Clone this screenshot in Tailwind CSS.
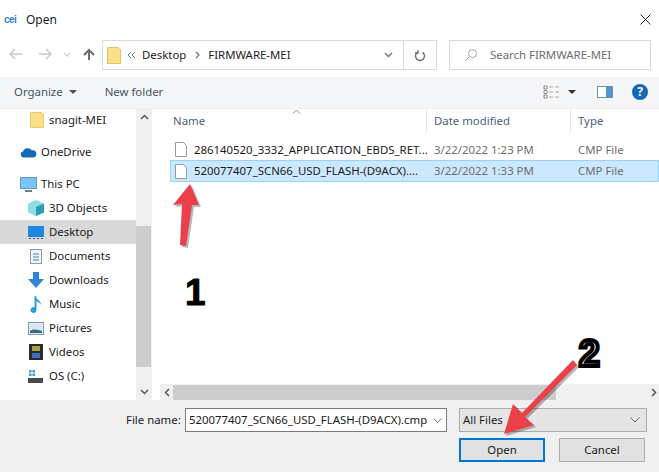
<!DOCTYPE html>
<html lang="en">
<head>
    <meta charset="UTF-8" />
    <title>Open</title>
    <script src="https://cdn.jsdelivr.net/npm/@tailwindcss/browser@4"></script>
</head>
<body class="bg-white">

<div class="relative w-[659px] h-[472px] overflow-hidden flex flex-col bg-white text-[11.4px] text-[#1a1a1a] font-['Noto_Sans','Open_Sans',sans-serif]">

    <!-- title bar -->
    <div class="h-[39px] shrink-0 flex items-center pl-[4px] pr-[8px]">
        <span class="w-[16px] text-[10px] tracking-[-0.5px] leading-none font-bold text-[#2f7fc8] font-['Liberation_Sans',sans-serif]">cei</span>
        <span class="ml-[6px] text-[12px]">Open</span>
        <svg class="ml-auto" width="11" height="11" viewBox="0 0 11 11"><path d="M.5.5l10 10M10.5.5l-10 10" stroke="#222" fill="none"/></svg>
    </div>

    <!-- address row -->
    <div class="h-[38px] shrink-0 flex items-start">
        <div class="w-[102px] h-[30px] flex items-center">
            <svg class="ml-[9px]" width="13" height="12" viewBox="0 0 13 12"><path d="M6 1L1 6l5 5M1 6h12" stroke="#c8c8c8" stroke-width="1.5" fill="none"/></svg>
            <svg class="ml-[17px]" width="13" height="12" viewBox="0 0 13 12"><path d="M7 1l5 5-5 5M12 6H0" stroke="#c8c8c8" stroke-width="1.5" fill="none"/></svg>
            <svg class="ml-[11px]" width="8" height="5" viewBox="0 0 8 5"><path d="M1 1l3 3 3-3" stroke="#d0d0d0" stroke-width="1.3" fill="none"/></svg>
            <svg class="ml-[12px]" width="12" height="13" viewBox="0 0 12 13"><path d="M6 12V2M1 7l5-5 5 5" stroke="#6d6d6d" stroke-width="2" fill="none"/></svg>
        </div>
        <div class="w-[335px] h-[30px] mt-[1px] border border-[#d9d9d9] flex items-center">
            <svg class="ml-[4px]" width="14" height="18" viewBox="0 0 14 18"><path d="M.5 1.5h11l2 2v14H.5z" fill="#fbe08c" stroke="#e3c565"/></svg>
            <svg class="ml-[6px]" width="9" height="8" viewBox="0 0 9 8"><path d="M4 1L1 4l3 3M8 1L5 4l3 3" stroke="#777" fill="none"/></svg>
            <span class="ml-[6px] leading-none">Desktop</span>
            <svg class="ml-[9px]" width="5" height="8" viewBox="0 0 5 8"><path d="M1 1l3 3-3 3" stroke="#777" stroke-width="1.3" fill="none"/></svg>
            <span class="ml-[8px] leading-none">FIRMWARE-MEI</span>
            <svg class="ml-auto mr-[10px]" width="9" height="6" viewBox="0 0 9 6"><path d="M1 1l3.500 3.500L8 1" stroke="#777" stroke-width="1.500" fill="none"/></svg>
            <div class="w-[33px] h-full border-l border-[#d9d9d9] flex items-center justify-center">
                <svg width="12" height="13" viewBox="0 0 12 13"><path d="M8.500 3.300A4.500 4.500 0 1 1 3.500 3.300M4 1v3H1" stroke="#6b6b6b" stroke-width="1.400" fill="none"/></svg>
            </div>
        </div>
        <div class="ml-[12px] w-[202px] h-[30px] mt-[1px] border border-[#d9d9d9] flex items-center text-[#6d6d6d]">
            <svg class="ml-[14px]" width="14" height="14" viewBox="0 0 14 14"><circle cx="8.500" cy="5.500" r="4" stroke="#a5a5a5" fill="none"/><path d="M5.500 8.500L1 13" stroke="#a5a5a5" fill="none"/></svg>
            <span class="ml-[12px] leading-none">Search FIRMWARE-MEI</span>
        </div>
    </div>

    <!-- toolbar -->
    <div class="h-[31px] shrink-0 bg-[#f5f6f7] flex items-center text-[#44546a] pl-[14px] pb-[1px]">
        <span>Organize</span>
        <svg class="ml-[6px]" width="8" height="4" viewBox="0 0 8 4"><path d="M0 0h8L4 4z" fill="#44546a"/></svg>
        <span class="ml-[28px]">New folder</span>
        <div class="ml-auto flex items-center pr-[11px]">
            <svg width="17" height="14" viewBox="0 0 17 14"><path d="M1 1h3v3H1zM1 5.500h3v3H1zM1 10h3v3H1z" stroke="#8c8c8c" fill="none"/><path d="M6 2h4M6 7h4M6 12h4M12 2h4M12 7h4M12 12h4" stroke="#a8a8a8"/></svg>
            <svg class="ml-[8px]" width="8" height="4" viewBox="0 0 8 4"><path d="M0 0h8L4 4z" fill="#333"/></svg>
            <svg class="ml-[21px]" width="16" height="12" viewBox="0 0 16 12"><rect x=".5" y=".5" width="15" height="11" fill="#fff" stroke="#7f8c99"/><rect x="9" y="1" width="6" height="10" fill="#4f96d4"/></svg>
            <span class="ml-[19px] w-[16px] h-[16px] rounded-full bg-[#1667b5] text-white text-[12px] font-bold leading-none flex items-center justify-center">?</span>
        </div>
    </div>

    <!-- main -->
    <div class="h-[292px] shrink-0 flex border-t border-[#eceef0]">
        <!-- nav pane -->
        <div class="w-[136px] shrink-0 flex flex-col">
            <div class="h-[22px] flex items-center pl-[30px]">
                <svg width="14" height="16" viewBox="0 0 14 16"><path d="M.5.500h11l2 2v13H.5z" fill="#fbe08c" stroke="#e8cc70"/></svg>
                <span class="ml-[5px]">snagit-MEI</span>
            </div>
            <div class="h-[9px]"></div>
            <div class="h-[24px] flex items-center pl-[20px]">
                <svg width="17" height="11" viewBox="0 0 17 11"><path d="M3.500 10.500a3 3 0 0 1-.5-5.900A5 5 0 0 1 12 3.500a3.500 3.500 0 0 1 1.500 7z" fill="#1469b8"/></svg>
                <span class="ml-[4px]">OneDrive</span>
            </div>
            <div class="h-[8px]"></div>
            <div class="h-[24px] flex items-center pl-[20px]">
                <svg width="17" height="15" viewBox="0 0 17 15"><rect x=".5" y=".5" width="16" height="11" fill="#7cc4f2" stroke="#5a9bd0"/><path d="M5 14h7" stroke="#6e7d8b" stroke-width="2"/></svg>
                <span class="ml-[4px]">This PC</span>
            </div>
            <div class="h-[24px] flex items-center pl-[28px]">
                <svg width="16" height="16" viewBox="0 0 16 16"><path d="M8 0l8 3.500v9L8 16 0 12.500v-9z" fill="#8fdde3"/><path d="M8 7l8-3.500v9L8 16z" fill="#2b9fb8"/></svg>
                <span class="ml-[5px]">3D Objects</span>
            </div>
            <div class="h-[24px] flex items-center pl-[28px] bg-[#d9d9d9]">
                <svg width="16" height="13" viewBox="0 0 16 13"><rect width="16" height="11" fill="#1d86e2"/><path d="M1 12.500h14" stroke="#1a5a99" stroke-dasharray="2 2"/></svg>
                <span class="ml-[5px]">Desktop</span>
            </div>
            <div class="h-[24px] flex items-center pl-[30px]">
                <svg width="12" height="15" viewBox="0 0 12 15"><rect x=".5" y=".5" width="11" height="14" fill="#f2f6fa" stroke="#8a9bab"/><path d="M3 5h6M3 8h6M3 11h6" stroke="#3b7fb8"/></svg>
                <span class="ml-[7px]">Documents</span>
            </div>
            <div class="h-[24px] flex items-center pl-[28px]">
                <svg width="16" height="16" viewBox="0 0 16 16"><path d="M5 0h6v7h5l-8 9-8-9h5z" fill="#2f86d8"/></svg>
                <span class="ml-[5px]">Downloads</span>
            </div>
            <div class="h-[24px] flex items-center pl-[30px]">
                <svg width="12" height="17" viewBox="0 0 12 17"><path d="M4.500 0h1.500c0 4 5 4 5 9-1-2-3-3.500-4.500-3.500V14a3 3 0 1 1-2-2.800z" fill="#2a9fd8"/></svg>
                <span class="ml-[7px]">Music</span>
            </div>
            <div class="h-[24px] flex items-center pl-[28px]">
                <svg width="16" height="13" viewBox="0 0 16 13"><rect x=".5" y=".5" width="15" height="12" fill="#dbe8f2" stroke="#8a9bab"/><path d="M2 9c4-3 8-1 12 0v2H2z" fill="#3f6a8a"/></svg>
                <span class="ml-[5px]">Pictures</span>
            </div>
            <div class="h-[24px] flex items-center pl-[29px]">
                <svg width="14" height="16" viewBox="0 0 14 16"><rect width="14" height="16" fill="#2a2a2a"/><rect x="3" y="2" width="8" height="5" fill="#a8a24a"/><rect x="3" y="9" width="8" height="5" fill="#3f6fc0"/></svg>
                <span class="ml-[6px]">Videos</span>
            </div>
            <div class="h-[24px] flex items-center pl-[28px]">
                <svg width="16" height="14" viewBox="0 0 16 14"><path d="M1 1h2.500v2.500H1zM4.500 1H7v2.500H4.500zM1 4.500h2.500V7H1zM4.500 4.500H7V7H4.500z" fill="#24a3dc"/><rect y="9" width="15" height="5" fill="#4a4a4a"/></svg>
                <span class="ml-[5px]">OS (C:)</span>
            </div>
        </div>

        <!-- nav scrollbar -->
        <div class="w-[16px] shrink-0 bg-[#f0f0f0] flex flex-col items-center">
            <div class="h-[16px] w-full flex items-center justify-center">
                <svg width="9" height="6" viewBox="0 0 9 6"><path d="M1 5l3.500-3.500L8 5" stroke="#555" stroke-width="1.500" fill="none"/></svg>
            </div>
            <div class="mt-[101px] h-[141px] w-[15px] self-start bg-[#cdcdcd]"></div>
            <div class="mt-auto h-[16px] w-full flex items-center justify-center">
                <svg width="9" height="6" viewBox="0 0 9 6"><path d="M1 1l3.500 3.500L8 1" stroke="#555" stroke-width="1.500" fill="none"/></svg>
            </div>
        </div>

        <!-- file list -->
        <div class="flex-1 min-w-0 flex flex-col">
            <div class="h-[24px] shrink-0 flex items-center text-[#4c607a] relative">
                <span class="w-[275px] pl-[21px] h-full flex items-center border-r border-[#e5e5e5]">Name</span>
                <span class="w-[144px] pl-[7px] h-full flex items-center border-r border-[#e5e5e5]">Date modified</span>
                <span class="pl-[7px]">Type</span>
                <svg class="absolute left-[140px] top-0" width="9" height="5" viewBox="0 0 9 5"><path d="M1 4.500L4.500 1 8 4.500" stroke="#8a8a8a" fill="none"/></svg>
            </div>
            <div class="flex-1 pt-[6px]">
                <div class="h-[21px] ml-[18px] flex items-center">
                    <svg class="ml-[5px]" width="12" height="15" viewBox="0 0 12 15"><path d="M.5.500h8l3 3v11H.5z" fill="#fff" stroke="#9a9a9a"/></svg>
                    <span class="ml-[7px] w-[240px] whitespace-nowrap">286140520_3332_APPLICATION_EBDS_RET...</span>
                    <span class="w-[144px] text-[#6d6d6d]">3/22/2022 1:23 PM</span>
                    <span class="text-[#6d6d6d]">CMP File</span>
                </div>
                <div class="h-[22px] ml-[18px] flex items-center bg-[#cce8ff] border border-[#99d1ff]">
                    <svg class="ml-[4px]" width="12" height="15" viewBox="0 0 12 15"><path d="M.5.500h8l3 3v11H.5z" fill="#fff" stroke="#9a9a9a"/></svg>
                    <span class="ml-[7px] w-[240px] whitespace-nowrap">520077407_SCN66_USD_FLASH-(D9ACX)....</span>
                    <span class="w-[144px] text-[#6d6d6d]">3/22/2022 1:33 PM</span>
                    <span class="text-[#6d6d6d]">CMP File</span>
                </div>
            </div>
            <!-- horizontal scrollbar -->
            <div class="h-[16px] shrink-0 ml-[8px] bg-[#f0f0f0] flex items-center">
                <div class="w-[13px] flex justify-center">
                    <svg width="6" height="9" viewBox="0 0 6 9"><path d="M5 1L1.500 4.500 5 8" stroke="#555" stroke-width="1.500" fill="none"/></svg>
                </div>
                <div class="h-[15px] w-[383px] bg-[#cdcdcd]"></div>
                <div class="ml-auto w-[10px] flex justify-center">
                    <svg width="6" height="9" viewBox="0 0 6 9"><path d="M1 1l3.500 3.500L1 8" stroke="#555" stroke-width="1.500" fill="none"/></svg>
                </div>
            </div>
        </div>
    </div>

    <!-- bottom panel -->
    <div class="flex-1 bg-[#f0f0f0] pt-[8px]">
        <div class="flex items-center h-[24px]">
            <span class="ml-[126px] w-[59px]">File name:</span>
            <div class="w-[262px] h-[24px] bg-white border border-[#7a7a7a] flex items-center pl-[3px]">
                <span class="whitespace-nowrap">520077407_SCN66_USD_FLASH-(D9ACX).cmp</span>
                <svg class="ml-auto mr-[4px]" width="9" height="5" viewBox="0 0 9 5"><path d="M.5.500l4 4 4-4" stroke="#777" fill="none"/></svg>
            </div>
            <div class="ml-[12px] w-[188px] h-[24px] bg-[#e5e5e5] border border-[#adadad] flex items-center pl-[3px]">
                <span>All Files</span>
                <svg class="ml-auto mr-[6px]" width="10" height="6" viewBox="0 0 10 6"><path d="M.5.500L5 5 9.500.500" stroke="#666" fill="none"/></svg>
            </div>
        </div>
        <div class="flex mt-[6px] ml-[459px]">
            <div class="w-[86px] h-[24px] bg-[#e1e1e1] border-2 border-[#0078d7] flex items-center justify-center">Open</div>
            <div class="ml-[14px] w-[86px] h-[24px] bg-[#e1e1e1] border border-[#adadad] flex items-center justify-center">Cancel</div>
        </div>
    </div>

    <!-- annotations over the dialog -->
    <svg class="absolute left-0 top-0 pointer-events-none" width="659" height="472" viewBox="0 0 659 472">
        <g transform="translate(2 2)" fill="#000" fill-opacity=".28">
            <path d="M190 184l9 21-7 0-6 41-6-1 2-41-9 1z"/>
            <path d="M573 360l4 5-52 52 9 8-30 9 9-30 9 9z"/>
        </g>
        <path d="M190 184l9 21-7 0-6 41-6-1 2-41-9 1z" fill="#ea4049"/>
        <path d="M573 360l4 5-52 52 9 8-30 9 9-30 9 9z" fill="#ea4049"/>
    </svg>
    <span class="absolute left-[185px] top-[273px] text-[37px] leading-[40px] font-bold text-black font-['Liberation_Sans',sans-serif] [-webkit-text-stroke:1px_#000]">1</span>
    <span class="absolute left-[579px] top-[334px] text-[37px] leading-[40px] font-bold text-white font-['Liberation_Sans',sans-serif] [-webkit-text-stroke:4px_#000]">2</span>
</div>

</body>
</html>
